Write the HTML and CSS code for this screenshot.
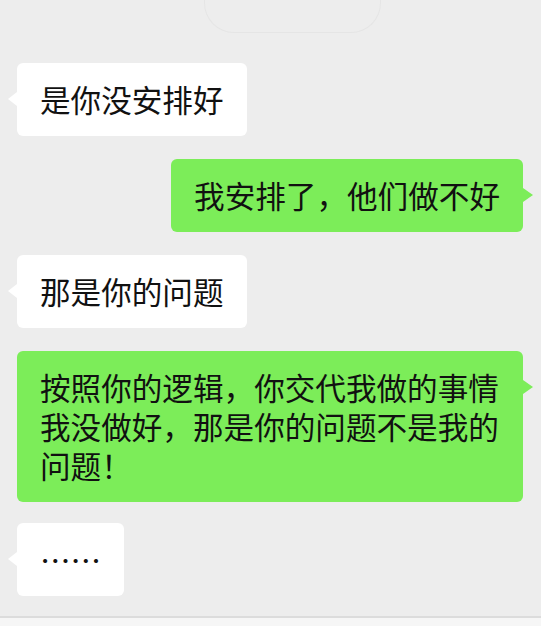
FILE: index.html
```html
<!DOCTYPE html>
<html lang="zh-CN">
<head>
  <meta charset="UTF-8">
  <title>聊天</title>
  <link rel="stylesheet" href="styles.css">
</head>
<body>
  <div class="screen">
    <div class="ghost"></div>

    <div class="chat">
      <div class="row left">
        <div class="bubble white">是你没安排好</div>
      </div>

      <div class="row right">
        <div class="bubble green">我安排了，他们做不好</div>
      </div>

      <div class="row left">
        <div class="bubble white">那是你的问题</div>
      </div>

      <div class="row right">
        <div class="bubble green">按照你的逻辑，你交代我做的事情我没做好，那是你的问题不是我的问题！</div>
      </div>

      <div class="row left last">
        <div class="bubble white">……</div>
      </div>
    </div>

    <div class="input-bar"></div>
  </div>
</body>
</html>
```

FILE: styles.css
```css
html, body {
  margin: 0;
  padding: 0;
}

body {
  background: #ededed;
  font-family: 'Noto Sans CJK SC', 'Noto Sans', sans-serif;
  color: #111;
}

.screen {
  height: 626px;
  overflow: hidden;
  display: flex;
  flex-direction: column;
}

/* faint edge of something scrolled away at the top */
.ghost {
  width: 175px;
  height: 32px;
  margin-left: 204px;
  border: 1.5px solid #e5e5e5;
  border-top: none;
  border-radius: 0 0 30px 30px;
}

.chat {
  display: flex;
  flex-direction: column;
  gap: 23px;
  padding: 30px 18px 0 17px;
}

.row {
  display: flex;
}

.row.left {
  justify-content: flex-start;
}

.row.right {
  justify-content: flex-end;
}

.row.last {
  margin-top: -2px;
}

.bubble {
  position: relative;
  box-sizing: border-box;
  max-width: 100%;
  padding: 17px 23px;
  font-size: 30.6px;
  line-height: 39px;
  border-radius: 6px;
}

.bubble.white {
  background: #fff;
}

.bubble.green {
  background: #7ced59;
}

.bubble::before {
  content: '';
  position: absolute;
  top: 29px;
  width: 0;
  height: 0;
  border-top: 7px solid transparent;
  border-bottom: 7px solid transparent;
}

.bubble.white::before {
  left: -9px;
  border-right: 9px solid #fff;
}

.bubble.green::before {
  right: -10px;
  border-left: 10px solid #7ced59;
}

.input-bar {
  margin-top: 20px;
  flex: 1;
  border-top: 2px solid #dcdcdc;
  background: #f6f6f6;
}
```
